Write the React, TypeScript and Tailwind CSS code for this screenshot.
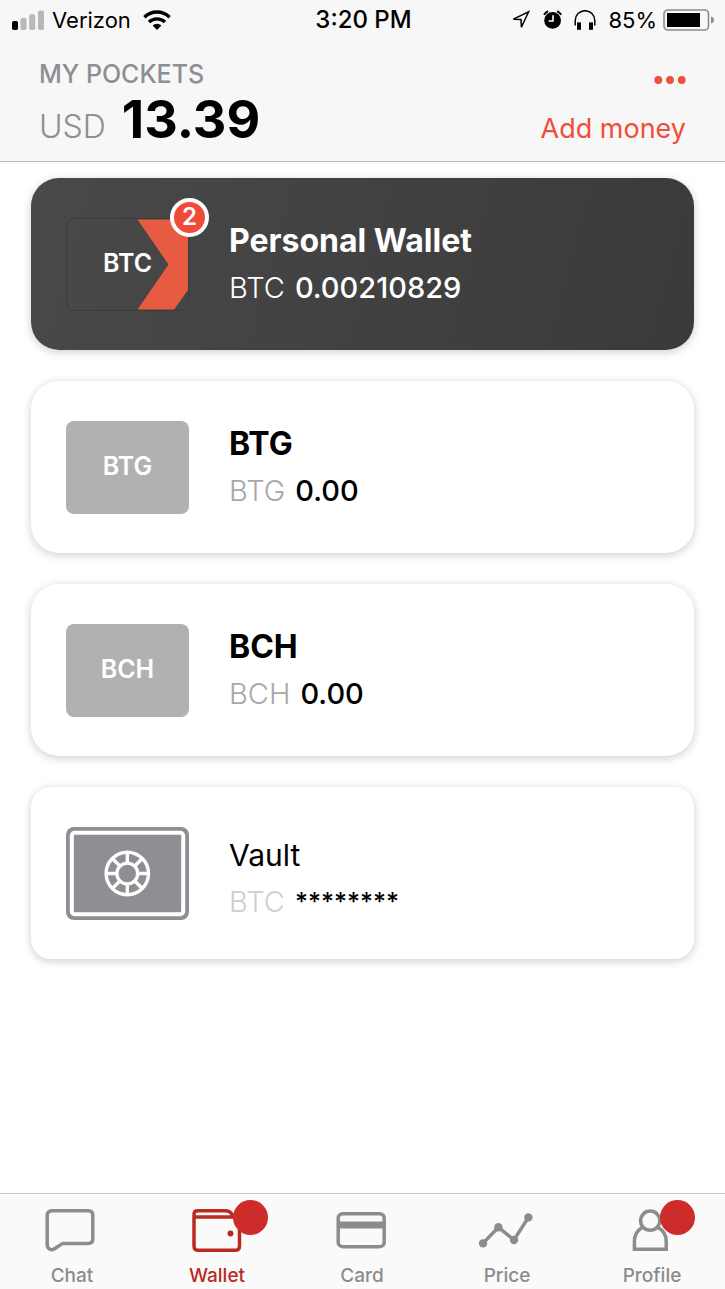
import React from 'react';
import clsx from 'clsx';

type Pocket = {
    code: string;
    title: string;
    amount: string;
    variant: 'active' | 'plain' | 'vault';
    alerts?: number;
};

const pockets: Pocket[] = [
    { code: 'BTC', title: 'Personal Wallet', amount: '0.00210829', variant: 'active', alerts: 2 },
    { code: 'BTG', title: 'BTG', amount: '0.00', variant: 'plain' },
    { code: 'BCH', title: 'BCH', amount: '0.00', variant: 'plain' },
    { code: 'BTC', title: 'Vault', amount: '********', variant: 'vault' },
];

const StatusBar = () => (
    <div className="grid h-10 grid-cols-[1fr_auto_1fr] items-center pr-2.5 pl-3 text-[22px] leading-7 text-black">
        <div className="flex items-center gap-2">
            <svg viewBox="0 0 32 20" className="h-5 w-8">
                <rect x="0" y="11" width="6" height="9" rx="1.8" />
                <g fill="#b9b9b9">
                    <rect x="8.5" y="8" width="6" height="12" rx="1.8" />
                    <rect x="17.2" y="4.2" width="6" height="15.8" rx="1.8" />
                    <rect x="26" y="0.5" width="6" height="19.5" rx="1.8" />
                </g>
            </svg>
            <span>Verizon</span>
            <svg viewBox="0 0 28 20" className="ml-1 h-5 w-7">
                <g fill="none" stroke="#000" strokeWidth="3.4">
                    <path d="M1.4 7.2a18 18 0 0 1 25.2 0" />
                    <path d="M6 12.1a11.6 11.6 0 0 1 16 0" />
                </g>
                <path d="M14 20l-4.4-4.6a6.4 6.4 0 0 1 8.8 0z" />
            </svg>
        </div>
        <span className="text-2xl leading-7 font-medium">3:20 PM</span>
        <div className="flex items-center justify-end gap-3">
            <svg viewBox="0 0 20 20" className="size-5" fill="none" stroke="#000" strokeWidth="1.5">
                <path d="M3.4 9.2L18.6 1.800 11.400 17.200 11 9.400z" />
            </svg>
            <svg viewBox="0 0 20 20" className="size-5">
                <circle cx="10.6" cy="10.4" r="8.4" />
                <path d="M2 4.800a12 12 0 0 1 4-3.600M19.200 4.800a12 12 0 0 0-4-3.600" fill="none" stroke="#000" strokeWidth="2" />
                <path d="M11 5.2v5.8H6.600" fill="none" stroke="#fff" strokeWidth="1.6" />
            </svg>
            <svg viewBox="0 0 22 20" className="h-5 w-[22px]">
                <path d="M1.200 15.500v-5a9.800 9.800 0 0 1 19.600 0v5" fill="none" stroke="#000" strokeWidth="1.5" />
                <rect x="3" y="12.4" width="4" height="7.4" />
                <rect x="15" y="12.4" width="4" height="7.4" />
            </svg>
            <div className="flex items-center gap-1.5">
                <span>85%</span>
                <svg viewBox="0 0 52 22" className="h-[22px] w-[52px]">
                    <rect x="1" y="1" width="44.5" height="20" rx="4" fill="none" stroke="#8c8c8c" strokeWidth="1.6" />
                    <rect x="4" y="4" width="33" height="14" />
                    <path d="M48 7.5q3 1 3 3.5t-3 3.5z" fill="#8c8c8c" />
                </svg>
            </div>
        </div>
    </div>
);

const Header = () => (
    <header className="border-b border-[#bdbdbf] bg-[#f7f7f7]">
        <StatusBar />
        <div className="flex justify-between pt-[22px] pr-[39px] pb-[13px] pl-[39px]">
            <div>
                <h1 className="text-[25px] leading-6 font-medium text-[#8e8e93]">MY POCKETS</h1>
                <p className="mt-1.5 flex items-baseline gap-4 text-[52px] leading-[56px] font-bold text-black">
                    <span className="text-[32px] leading-10 font-light text-[#8e8e93]">USD</span>
                    13.39
                </p>
            </div>
            <div className="flex flex-col items-end justify-between pt-3 pb-[3px] text-[#f04e37]">
                <button aria-label="More options" className="flex">
                    <svg viewBox="0 0 32 12" className="h-3 w-8 fill-current">
                        <circle cx="4.3" cy="6" r="3.9" />
                        <circle cx="16" cy="6" r="3.9" />
                        <circle cx="27.7" cy="6" r="3.9" />
                    </svg>
                </button>
                <button className="text-[27px] leading-8">Add money</button>
            </div>
        </div>
    </header>
);

const VaultDrawing = () => (
    <svg viewBox="0 0 123 93" className="h-[93px] w-[123px]">
        <rect width="123" height="93" rx="8" fill="#8e8e93" />
        <rect x="5.8" y="5.8" width="111.4" height="81.4" rx="3" fill="none" stroke="#fff" strokeWidth="4" />
        <g transform="translate(61.3 46.5)" fill="none" stroke="#fff" strokeWidth="3.4">
            <circle r="21.2" />
            <circle r="10.4" />
            <path d="M0-10v-11M0 10v11M-10 0h-11M10 0h11M7.2 7.2l7.8 7.8M-7.2 7.2l-7.8 7.8M7.2-7.2l7.8-7.8M-7.2-7.2l-7.8-7.8" />
        </g>
    </svg>
);

const Thumb = ({ pocket }: { pocket: Pocket }) => {
    if (pocket.variant === 'vault') return <VaultDrawing />;

    return (
        <div
            className={clsx(
                'relative flex h-[93px] w-[123px] items-center justify-center rounded-lg text-[25px] font-semibold text-white',
                pocket.variant === 'active' ? 'border border-[#3c3c3c]' : 'bg-[#b1b1b1]',
            )}
        >
            {pocket.variant === 'active' && (
                <svg viewBox="0 0 121 91" className="absolute inset-0 size-full">
                    <path d="M70.5 0.5H113q8 0 8 8V71L107 90.500H70.500l31-45z" fill="#e65b41" />
                </svg>
            )}
            <span className="relative">{pocket.code}</span>
            {pocket.alerts && (
                <span className="absolute -top-[21px] -right-[21px] flex size-[39px] items-center justify-center rounded-full border-4 border-white bg-[#ee4b39] text-2xl">
                    {pocket.alerts}
                </span>
            )}
        </div>
    );
};

const PocketCard = ({ pocket }: { pocket: Pocket }) => {
    const active = pocket.variant === 'active';
    const vault = pocket.variant === 'vault';

    return (
        <li
            className={clsx(
                'flex h-[172px] items-center gap-10 px-[35px] shadow-[0_2px_10px_rgba(0,0,0,0.2)]',
                active ? 'bg-linear-[105deg] from-[#494949] to-[#3a3a3a] text-white' : 'bg-white text-black',
                vault ? 'rounded-[20px]' : 'rounded-[28px]',
            )}
        >
            <Thumb pocket={pocket} />
            <div className={clsx('flex flex-col gap-[7px] leading-10', vault && 'pt-2.5')}>
                <h2 className={vault ? 'text-[30px]' : 'text-[32px] font-bold'}>{pocket.title}</h2>
                <p className="flex gap-2.5 text-[29px] font-medium">
                    <span
                        className={clsx(
                            'font-light',
                            pocket.variant === 'plain' && 'text-[#a8a8a8]',
                            vault && 'text-[#cfcfcf]',
                        )}
                    >
                        {pocket.code}
                    </span>
                    <span className={clsx(vault && 'text-[25px]')}>{pocket.amount}</span>
                </p>
            </div>
        </li>
    );
};

const tabs = [
    {
        label: 'Chat',
        icon: (
            <path d="M10 4.8H46.2Q50.8 4.8 50.8 9.4V33Q50.8 37.4 46.2 37.4H20.8L12.4 42.8C9 45 5.2 42.7 5.2 38.8V9.4Q5.2 4.8 10 4.8z" />
        ),
    },
    {
        label: 'Wallet',
        active: true,
        badge: 'left-[46px]',
        icon: (
            <>
                <path d="M7 11V40Q7 44.3 11.3 44.3H48.2Q52.5 44.3 52.5 40V15.3Q52.5 11 48.2 11H7V8.5Q7 4.8 10.7 4.8H38.5Q44.5 4.8 46 11" />
                <circle cx="43.5" cy="27.4" r="1.5" strokeWidth="3" />
            </>
        ),
    },
    {
        label: 'Card',
        icon: (
            <>
                <rect x="6.2" y="7.7" width="46" height="33" rx="4.5" />
                <path d="M6.2 19h46" strokeWidth="7" />
            </>
        ),
    },
    {
        label: 'Price',
        icon: (
            <>
                <path d="M6 37.4L21.4 21.2 37 34 51.4 11.4" />
                <g fill="currentColor" stroke="none">
                    <circle cx="6" cy="37.4" r="4.2" />
                    <circle cx="21.4" cy="21.2" r="4.2" />
                    <circle cx="37" cy="34" r="4.2" />
                    <circle cx="51.4" cy="11.4" r="4.2" />
                </g>
            </>
        ),
    },
    {
        label: 'Profile',
        badge: 'left-[38px]',
        icon: (
            <>
                <circle cx="28.2" cy="14.7" r="9.6" />
                <path d="M20.2 21.5C15 24.5 12.4 29.5 12.4 35.5V43.3H44.2V35.5C44.2 29.5 41.5 24.5 36.2 21.5" />
            </>
        ),
    },
];

const TabBar = () => (
    <nav className="grid grid-cols-5 border-t border-[#c4c4c6] bg-[#fafafa]">
        {tabs.map((tab) => (
            <a
                key={tab.label}
                href="#"
                className={clsx(
                    'flex flex-col items-center gap-2.5 pt-3 pr-px pb-px text-[19px] leading-6 font-medium',
                    tab.active ? 'text-[#bb2a20]' : 'text-[#8c8c8c]',
                )}
            >
                <span className="relative">
                    <svg viewBox="0 0 60 48" className="h-12 w-[60px]" fill="none" stroke="currentColor" strokeWidth="3.5">
                        {tab.icon}
                    </svg>
                    {tab.badge && (
                        <span className={clsx('absolute -top-1.5 size-[35px] rounded-full bg-[#cd2c2a]', tab.badge)} />
                    )}
                </span>
                {tab.label}
            </a>
        ))}
    </nav>
);

const App = () => {
    return (
        <div className="flex min-h-screen flex-col bg-white font-['Inter','Liberation_Sans',sans-serif]">
            <Header />
            <main className="flex-1 px-[31px] py-4">
                <ul className="flex flex-col gap-[31px]">
                    {pockets.map((pocket) => (
                        <PocketCard key={pocket.title} pocket={pocket} />
                    ))}
                </ul>
            </main>
            <TabBar />
        </div>
    );
};

export default App;
